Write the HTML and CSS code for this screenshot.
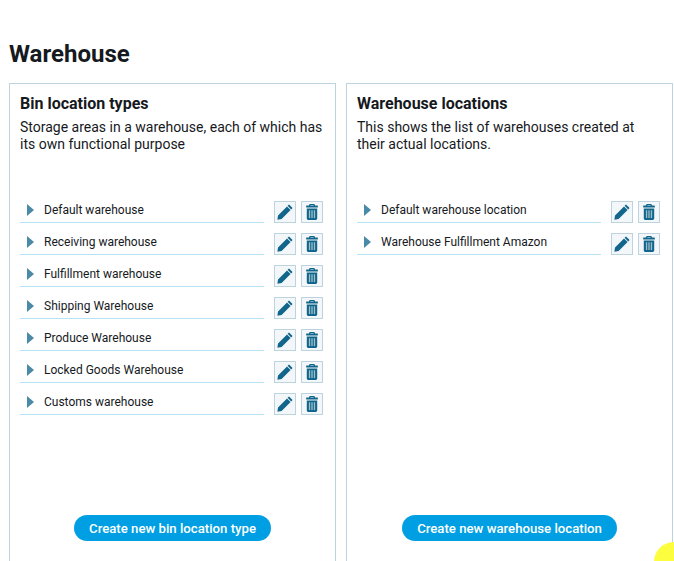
FILE: index.html
```html
<!DOCTYPE html>
<html lang="en">
<head>
  <meta charset="UTF-8">
  <title>Warehouse</title>
  <link rel="stylesheet" href="styles.css">
</head>
<body>
  <svg width="0" height="0" class="defs">
    <symbol id="pencil" viewBox="0 0 16 16">
      <path d="M12 0.4 L15.6 4 L14.2 5.4 L10.6 1.8 Z M10 2.4 L13.6 6 L4.6 15 L0.4 15.7 L1 11.4 Z"/>
    </symbol>
    <symbol id="trash" viewBox="0 0 12 16">
      <path d="M3.6 0 H8.4 L9 1.6 H11.8 V3.6 H0.2 V1.6 H3 Z M4.6 0.9 L4.3 1.6 H7.7 L7.4 0.9 Z" fill-rule="evenodd"/>
      <path d="M0.8 4.4 H11.2 V14.6 Q11.2 16 9.8 16 H2.2 Q0.8 16 0.8 14.6 Z"/>
      <path class="trash-bars" d="M2.9 6.2 H4.2 V14 H2.9 Z M5.35 6.2 H6.65 V14 H5.35 Z M7.8 6.2 H9.1 V14 H7.8 Z"/>
    </symbol>
  </svg>

  <h1 class="page-title">Warehouse</h1>

  <div class="cards">
    <!-- Bin location types -->
    <section class="card">
      <h2>Bin location types</h2>
      <p class="desc">Storage areas in a warehouse, each of which has its own functional purpose</p>
      <ul class="rows">
        <li class="row">
          <span class="row-label"><i class="arrow"></i>Default warehouse</span>
          <span class="btn-icon"><svg class="ic-pencil"><use href="#pencil"/></svg></span>
          <span class="btn-icon"><svg class="ic-trash"><use href="#trash"/></svg></span>
        </li>
        <li class="row">
          <span class="row-label"><i class="arrow"></i>Receiving warehouse</span>
          <span class="btn-icon"><svg class="ic-pencil"><use href="#pencil"/></svg></span>
          <span class="btn-icon"><svg class="ic-trash"><use href="#trash"/></svg></span>
        </li>
        <li class="row">
          <span class="row-label"><i class="arrow"></i>Fulfillment warehouse</span>
          <span class="btn-icon"><svg class="ic-pencil"><use href="#pencil"/></svg></span>
          <span class="btn-icon"><svg class="ic-trash"><use href="#trash"/></svg></span>
        </li>
        <li class="row">
          <span class="row-label"><i class="arrow"></i>Shipping Warehouse</span>
          <span class="btn-icon"><svg class="ic-pencil"><use href="#pencil"/></svg></span>
          <span class="btn-icon"><svg class="ic-trash"><use href="#trash"/></svg></span>
        </li>
        <li class="row">
          <span class="row-label"><i class="arrow"></i>Produce Warehouse</span>
          <span class="btn-icon"><svg class="ic-pencil"><use href="#pencil"/></svg></span>
          <span class="btn-icon"><svg class="ic-trash"><use href="#trash"/></svg></span>
        </li>
        <li class="row">
          <span class="row-label"><i class="arrow"></i>Locked Goods Warehouse</span>
          <span class="btn-icon"><svg class="ic-pencil"><use href="#pencil"/></svg></span>
          <span class="btn-icon"><svg class="ic-trash"><use href="#trash"/></svg></span>
        </li>
        <li class="row">
          <span class="row-label"><i class="arrow"></i>Customs warehouse</span>
          <span class="btn-icon"><svg class="ic-pencil"><use href="#pencil"/></svg></span>
          <span class="btn-icon"><svg class="ic-trash"><use href="#trash"/></svg></span>
        </li>
      </ul>
      <div class="card-foot"><a class="btn-create">Create new bin location type</a></div>
    </section>

    <!-- Warehouse locations -->
    <section class="card">
      <h2>Warehouse locations</h2>
      <p class="desc">This shows the list of warehouses created at their actual locations.</p>
      <ul class="rows">
        <li class="row">
          <span class="row-label"><i class="arrow"></i>Default warehouse location</span>
          <span class="btn-icon"><svg class="ic-pencil"><use href="#pencil"/></svg></span>
          <span class="btn-icon"><svg class="ic-trash"><use href="#trash"/></svg></span>
        </li>
        <li class="row">
          <span class="row-label"><i class="arrow"></i>Warehouse Fulfillment Amazon</span>
          <span class="btn-icon"><svg class="ic-pencil"><use href="#pencil"/></svg></span>
          <span class="btn-icon"><svg class="ic-trash"><use href="#trash"/></svg></span>
        </li>
      </ul>
      <div class="card-foot"><a class="btn-create">Create new warehouse location</a></div>
    </section>
  </div>

  <div class="help-dot"></div>
</body>
</html>
```

FILE: styles.css
```css
html, body {
  height: 100%;
  overflow: hidden;
}

body {
  margin: 0;
  padding: 0 1px 0 9px;
  font-family: Roboto, sans-serif;
  color: #16191d;
  background: #fff;
}

.defs {
  position: absolute;
}

.page-title {
  margin: 0;
  padding-top: 39px;
  height: 44px;
  font-size: 24px;
  line-height: 30px;
  font-weight: 700;
}

.cards {
  display: flex;
  gap: 10px;
}

.card {
  flex: 1;
  display: flex;
  flex-direction: column;
  height: 500px;
  box-sizing: border-box;
  padding: 10px 12px 10px 10px;
  border: 1px solid #bdd3df;
}

.card h2 {
  margin: 0;
  font-size: 16px;
  line-height: 20px;
  font-weight: 700;
}

.desc {
  margin: 5px 0 0;
  height: 72px;
  font-size: 14px;
  line-height: 17px;
}

.rows {
  list-style: none;
  margin: 0;
  padding: 0;
}

.row {
  display: flex;
  align-items: flex-end;
  gap: 5px;
  height: 32px;
}

.row-label {
  flex: 1;
  display: flex;
  align-items: center;
  height: 22px;
  margin-right: 5px;
  border-bottom: 1px solid #b5e3f5;
  font-size: 12px;
  line-height: 14px;
  padding-bottom: 4px;
  box-sizing: border-box;
}

.arrow {
  width: 0;
  height: 0;
  margin: 0 10px 0 7px;
  border-left: 7px solid #4b8aa6;
  border-top: 6px solid transparent;
  border-bottom: 6px solid transparent;
}

.btn-icon {
  display: flex;
  align-items: center;
  justify-content: center;
  width: 22px;
  height: 22px;
  box-sizing: border-box;
  border: 1px solid #bdd3df;
  background: #f3f7f9;
  fill: #12668c;
}

.ic-pencil {
  width: 16px;
  height: 16px;
}

.ic-trash {
  width: 12px;
  height: 16px;
}

.trash-bars {
  fill: #9dbdcb;
}

.card-foot {
  margin-top: auto;
  margin-bottom: 31px;
  padding-left: 2px;
  text-align: center;
}

.btn-create {
  display: inline-block;
  height: 26px;
  padding: 0 15px;
  border-radius: 13px;
  background: #009fe3;
  color: #fff;
  font-size: 13.2px;
  font-weight: 500;
  line-height: 27px;
}

.help-dot {
  position: absolute;
  left: 654px;
  top: 542px;
  width: 40px;
  height: 40px;
  border-radius: 50%;
  background: #fdfd3f;
}
```
